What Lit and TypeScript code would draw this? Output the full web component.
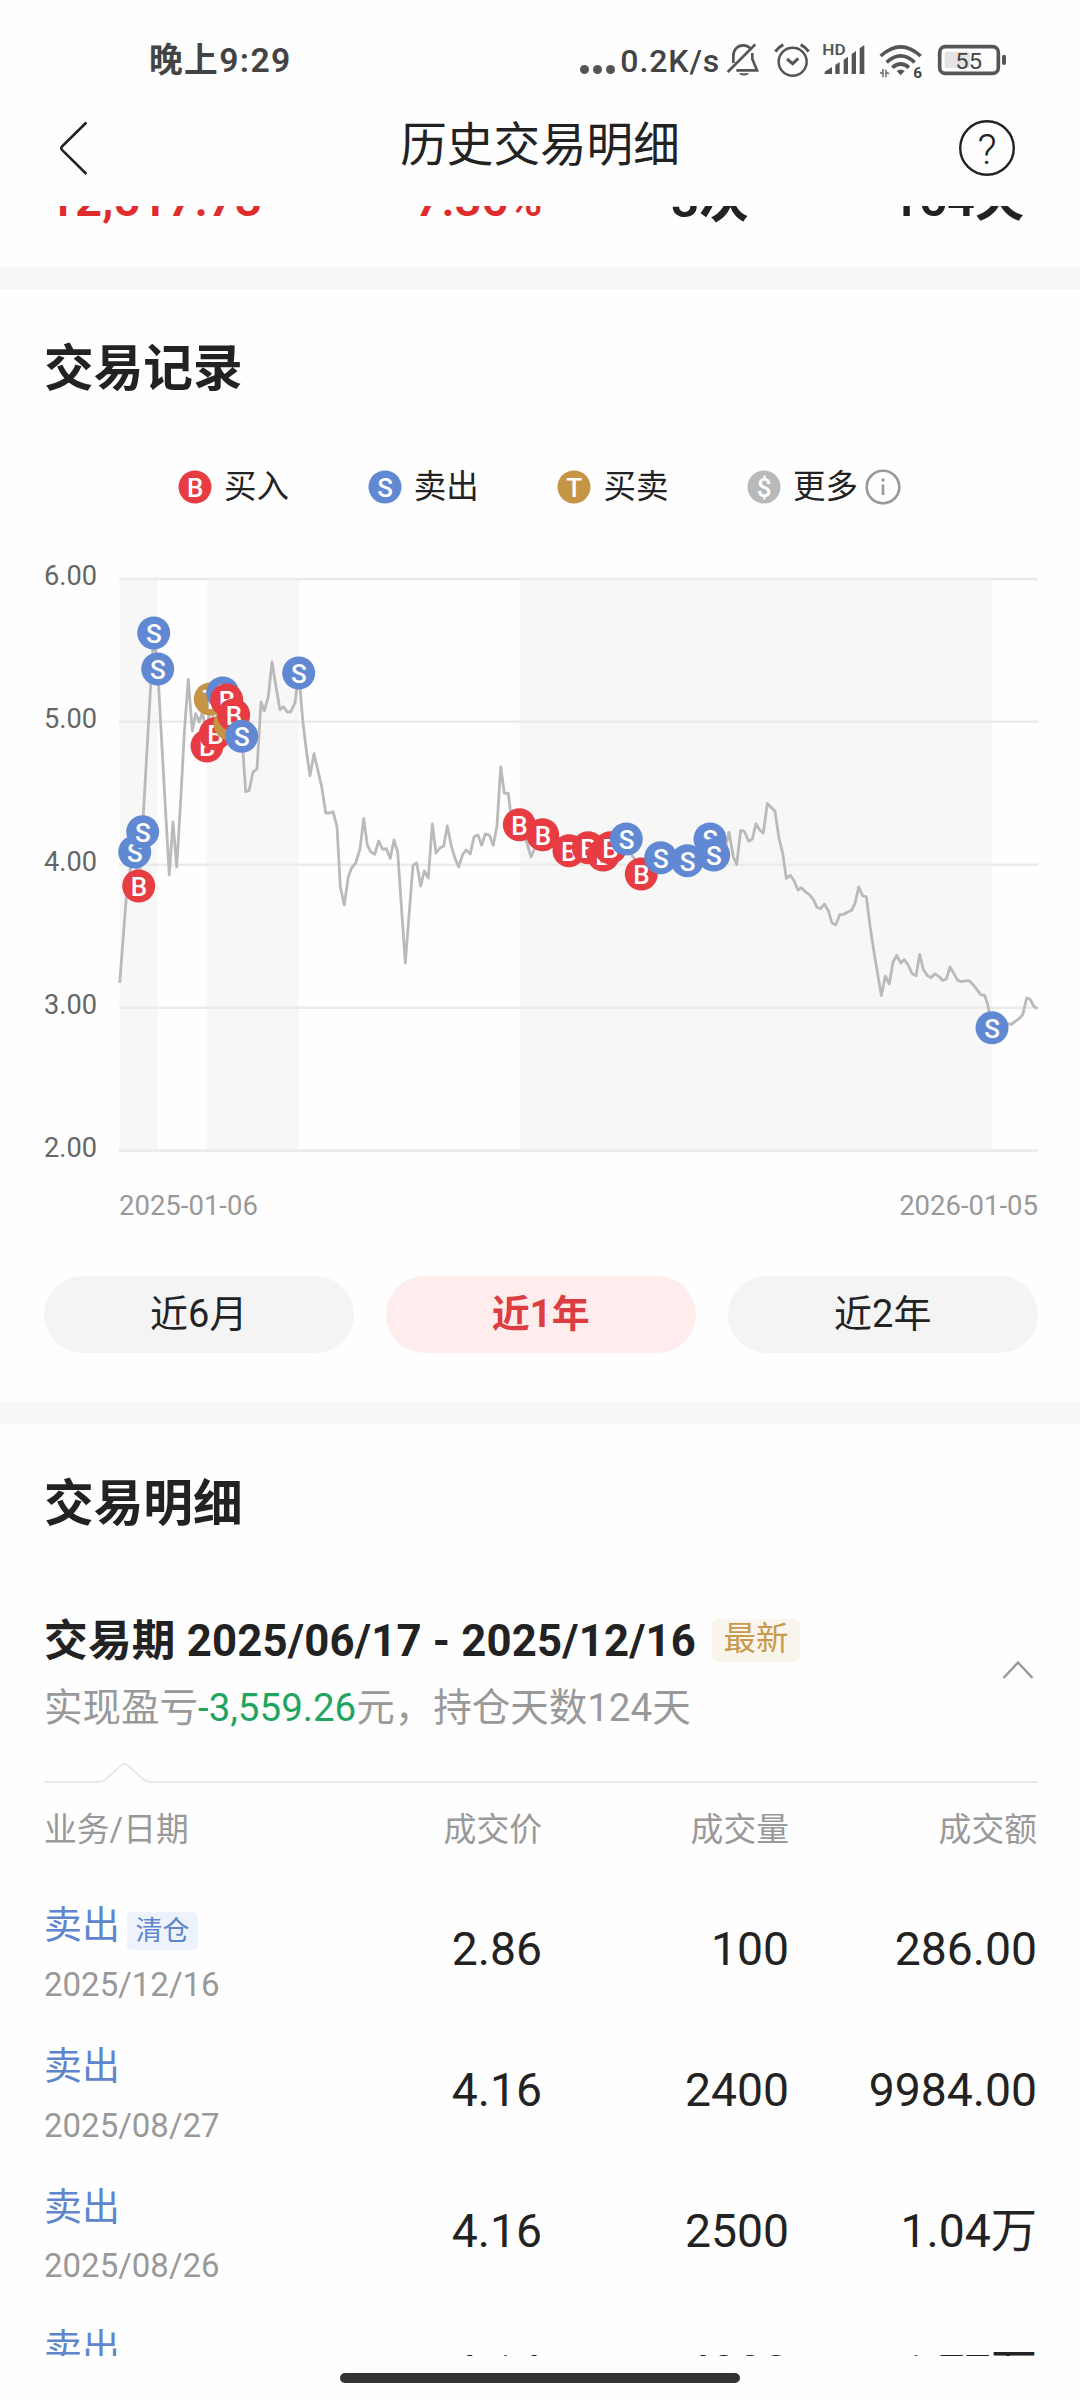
import { LitElement, html, css, svg } from "lit";
import { customElement, property } from "lit/decorators.js";
import { classMap } from "lit/directives/class-map.js";

type Kind = "B" | "S" | "T" | "$";

const COLORS: Record<Kind, string> = {
  B: "#e63c42",
  S: "#6088d3",
  T: "#c59545",
  $: "#b9b9b9",
};

const LINE: number[][] = [
  [119.7, 983], [123, 940], [126.5, 895], [131, 864], [134.7, 852], [138.7, 886], [142.7, 831.7], [143.5, 812],
  [147, 750], [150.7, 685], [153.7, 633], [157.7, 669], [161.5, 738], [165.5, 810], [169.3, 875], [173, 822],
  [176.7, 867], [180.7, 800], [184.5, 730], [188.3, 679.5], [192.3, 731], [195.7, 713.7], [199.3, 722],
  [202.3, 712], [207, 735], [210.5, 700], [215.3, 734], [222.7, 693], [226.7, 700], [230, 724], [233.7, 715],
  [241.7, 736], [243, 752], [245.7, 791.7], [249, 790.7], [253, 772], [257, 769], [261, 702], [264.3, 711],
  [268.3, 696.7], [272, 662], [276, 686.7], [280, 709.7], [283.3, 706.7], [287.3, 712], [290.7, 712],
  [295, 702.7], [298.7, 673], [303, 723], [306.7, 753], [310, 775.7], [314, 753.7], [321.7, 786.7],
  [325.7, 813], [329.3, 813], [333, 811.7], [337, 826.7], [340.3, 886.7], [344.3, 905], [348.3, 876.7],
  [351.7, 867.8], [355.7, 863], [360, 849], [363.7, 818.4], [367.3, 845], [370.7, 851.8], [374.7, 854.3],
  [378.7, 841], [382.7, 849.4], [386.3, 848.6], [390.3, 858.4], [394, 840], [397.7, 852], [401.7, 911],
  [405.3, 963], [409, 915.5], [413, 865.3], [416.7, 862.9], [420.7, 886], [424.3, 871], [428.3, 878],
  [432.3, 824], [436, 853], [440, 848], [443.7, 846], [447.3, 826], [451.3, 846], [455, 858.4], [458.7, 867],
  [462.7, 854.3], [466.3, 850], [470.3, 853.9], [474, 836.7], [478, 835], [481.7, 845.3], [485.3, 833.9],
  [489.3, 835], [493.3, 845.3], [497, 825.7], [500.7, 767], [504.3, 793], [508.3, 793.5], [511.5, 820],
  [519.3, 825], [527, 843], [531, 857], [535, 848], [542.7, 835], [569, 850], [588, 848], [603, 852],
  [610, 848], [626, 840], [631, 854], [636, 861], [641, 872], [660, 858], [687, 860], [710, 840],
  [714, 855], [725, 850], [729, 832.3], [733.3, 856.7], [736.7, 864.5], [740.7, 830.3], [744.3, 831.3],
  [748.7, 841.3], [752.3, 839], [756, 823.7], [759.7, 830], [763.3, 833], [767.3, 803.5], [775, 811.3],
  [779, 838.3], [782.7, 853.3], [786.3, 878.3], [790.3, 875.3], [794, 880.7], [798, 890], [801.3, 887.7],
  [805.7, 892], [809.3, 894.7], [813.3, 899.3], [817, 907.3], [820.7, 908.7], [824.3, 904], [828.3, 910.7],
  [832, 922.9], [835.7, 924.9], [839.7, 914.7], [843.7, 914.3], [847.3, 912.2], [851.7, 910.2],
  [855, 903.3], [858.7, 887], [862.7, 896], [866.3, 896.7], [870.3, 927.8], [874, 952.2], [881.3, 995.5],
  [885.3, 976], [889.3, 984], [893, 962], [896.7, 955.5], [900.7, 962.9], [904.3, 959.6], [908.3, 965.3],
  [912, 973.5], [916, 975.9], [919.7, 954.3], [923.3, 969.4], [927.3, 975.5], [931, 977.6], [935, 973.9],
  [938.7, 976.3], [942.7, 980.4], [946.3, 979.2], [950, 967], [954, 973.9], [957.7, 980.4], [961.7, 981.6],
  [965.3, 980.8], [969.3, 980.8], [973.3, 984.9], [980.7, 994.7], [984.7, 995.5], [987.7, 1004.5],
  [992, 1026], [1003, 1022], [1011, 1024.5], [1015, 1021.6], [1019, 1018.8], [1022.7, 1014.7],
  [1026.7, 998], [1030, 999.2], [1034, 1006.5], [1037.5, 1008.6],
];

const MARKS: [Kind, number, number][] = [
  ["S", 134.7, 852], ["B", 138.7, 886], ["S", 142.7, 831.7], ["S", 153.7, 633], ["S", 157.7, 669],
  ["B", 207, 746], ["T", 210.3, 699], ["B", 215.3, 733.7], ["S", 222.7, 693], ["B", 226.7, 700],
  ["T", 230, 724], ["B", 233.7, 715], ["S", 241.7, 736.3], ["S", 298.7, 673],
  ["B", 519.3, 824.7], ["B", 542.7, 834.7], ["B", 569, 850.7], ["B", 588.3, 847.7], ["B", 603.3, 855],
  ["B", 610.3, 847.7], ["S", 626.3, 839], ["B", 641.3, 874], ["S", 660.7, 857.7], ["S", 687.3, 860.7],
  ["S", 710, 839], ["S", 713.7, 855], ["S", 992, 1027.8],
];

const BANDS: [number, number][] = [[119.7, 157.7], [207, 298.7], [519.5, 992]];

const GRID: [string, number][] = [
  ["6.00", 579], ["5.00", 721.8], ["4.00", 864.8], ["3.00", 1007.8], ["2.00", 1150.6],
];

const mark = (kind: Kind, x: number, y: number) => svg`
  <circle cx=${x} cy=${y} r="16.5" fill=${COLORS[kind]}></circle>
  <text class="letter" x=${x + 0.2} y=${y + 9.9} text-anchor="middle">${kind}</text>`;

@customElement("trade-chart")
class TradeChart extends LitElement {
  static styles = css`
    :host { display: block; }
    svg { display: block; }
    text { font-family: Roboto, sans-serif; }
    .letter { font-size: 26px; font-weight: 500; fill: #fff; }
    .axis { font-size: 27.2px; fill: #666; }
  `;
  render() {
    return html`<svg width="1080" height="620" viewBox="0 540 1080 620">
      ${BANDS.map(([a, b]) => svg`<rect x=${a} y="580" width=${b - a} height="570" fill="#f7f7f7"></rect>`)}
      ${GRID.map(([label, y]) => svg`
        <line x1="119" x2="1038" y1=${y} y2=${y} stroke="#ebebeb" stroke-width="2.6"></line>
        <text class="axis" x="44" y=${y + 6.4}>${label}</text>`)}
      <polyline points=${LINE.map((p) => p.join(",")).join(" ")} fill="none" stroke="#bababa"
        stroke-width="2.8" stroke-linejoin="round"></polyline>
      ${MARKS.map(([k, x, y]) => mark(k, x, y))}
    </svg>`;
  }
}

@customElement("trade-dot")
class TradeDot extends LitElement {
  @property() kind: Kind = "B";
  static styles = css`
    :host { display: block; width: 34px; height: 34px; }
    svg { display: block; }
    .letter { font-family: Roboto, sans-serif; font-size: 26px; font-weight: 500; fill: #fff; }
  `;
  render() {
    return html`<svg width="34" height="34" viewBox="0 0 34 34">${mark(this.kind, 17, 17)}</svg>`;
  }
}

@customElement("status-bar")
class StatusBar extends LitElement {
  static styles = css`
    :host {
      display: flex; align-items: center; box-sizing: border-box; height: 95px; padding: 35px 70px 0 149px;
      font-family: Roboto, "Noto Sans CJK SC", sans-serif; color: #434343; font-weight: 500;
    }
    svg { display: block; }
    .time { font-size: 33.7px; line-height: 52px; letter-spacing: 1.4px; font-weight: 600; flex: 1; align-self: flex-start; }
    .dots { display: flex; gap: 4px; padding: 9px 5px 0 0; }
    .dot { width: 9px; height: 9px; border-radius: 50%; background: #555; }
    .rate { font-size: 32px; line-height: 52px; letter-spacing: 0.9px; width: 103px; white-space: nowrap; align-self: flex-start; }
    .icon-text { font-family: Roboto, sans-serif; }
  `;
  render() {
    return html`
      <span class="time">晚上9:29</span>
      <span class="dots"><i class="dot"></i><i class="dot"></i><i class="dot"></i></span>
      <span class="rate">0.2K/s</span>
      <svg width="44" height="60" viewBox="460 0 132 180" fill="none" stroke="#555" stroke-width="8">
        <path d="M491 84V63C491 44 503 31 521 31C531 31 538 35 543 41M548 54V72L562 106H500" />
        <path d="M474 111L557 28" />
        <path d="M508 115H538C534 124 512 124 508 115Z" fill="#555" stroke="none" />
      </svg>
      <svg width="49.33" height="60" viewBox="592 0 148 180" fill="none" stroke="#555" stroke-width="7.5">
        <circle cx="669" cy="80" r="42" />
        <path d="M617 50Q627 36 641 29M717 50Q707 36 693 29" stroke-width="9" />
        <path d="M652 72L669 86L686 70" stroke-width="9" />
      </svg>
      <svg width="56.67" height="60" viewBox="740 0 170 180" fill="#555">
        <text class="icon-text" x="756" y="59" font-size="45" font-weight="600" textLength="70" lengthAdjust="spacingAndGlyphs">HD</text>
        <path d="M763 117V110L785 96V117ZM795 117V90L808 81V117ZM820 117V74L833 65V117ZM844 117V57L857 48V117ZM868 117V40L882 30V117Z" />
      </svg>
      <svg width="56.67" height="60" viewBox="910 0 170 180" fill="none" stroke="#555" stroke-width="11">
        <path d="M933 63Q993 8 1053 63M951 82Q993 43 1035 82M968 98Q993 76 1018 98" />
        <path d="M981 108Q993 99 1005 108L993 121Z" fill="#555" stroke="none" />
        <path d="M940 102V127M940 116L931 113M949 127V104M949 112L958 116" stroke="#777" stroke-width="5" />
        <text class="icon-text" x="1031" y="128" font-size="46" font-weight="700" fill="#444" stroke="none">6</text>
      </svg>
      <svg width="80" height="60" viewBox="1080 0 240 180">
        <rect x="1109" y="35" width="176" height="80" rx="17" fill="none" stroke="#555" stroke-width="11" />
        <rect x="1124" y="50" width="76" height="49" rx="7" fill="#e3e3e3" />
        <text class="icon-text" x="1156" y="101" font-size="68" font-weight="400" fill="#444" textLength="80" lengthAdjust="spacingAndGlyphs">55</text>
        <rect x="1296" y="59" width="12" height="31" rx="6" fill="#555" />
      </svg>`;
  }
}

interface Row {
  date: string;
  price: string;
  volume: string;
  amount: string;
  tag?: string;
}

const ROWS: Row[] = [
  { date: "2025/12/16", price: "2.86", volume: "100", amount: "286.00", tag: "清仓" },
  { date: "2025/08/27", price: "4.16", volume: "2400", amount: "9984.00" },
  { date: "2025/08/26", price: "4.16", volume: "2500", amount: "1.04万" },
  { date: "2025/08/25", price: "4.14", volume: "4300", amount: "1.77万" },
];

const LEGEND: [Kind, string][] = [["B", "买入"], ["S", "卖出"], ["T", "买卖"], ["$", "更多"]];
const RANGES = ["近6月", "近1年", "近2年"];

@customElement("app-root")
class AppRoot extends LitElement {
  static styles = css`
    :host {
      display: flex; flex-direction: column; width: 1080px; height: 2400px; overflow: hidden;
      background: #fefefe; color: #222; font-family: Roboto, "Noto Sans CJK SC", sans-serif;
    }
    svg { display: block; }
    .nav { display: flex; align-items: center; justify-content: space-between; height: 105px; padding: 0 64px 6px 58px; flex: none; }
    .nav-title { font-size: 46.6px; line-height: 60px; padding: 0 0 5px 32px; }
    .help { font-size: 42px; font-weight: 300; fill: #222; }
    .page { height: 2149.5px; flex: none; overflow: hidden; }
    .stats { display: flex; margin-top: -31px; padding: 0 0 42px 48px; font-size: 47.4px; line-height: 50px; font-weight: 600; white-space: nowrap; }
    .stat { flex: none; }
    .up { color: #e02c2c; width: 367px; }
    .rate { width: 256px; font-size: 46.6px; }
    .count { width: 220px; font-size: 49.5px; }
    .days { font-size: 49px; }
    .divider { height: 22px; background: #f7f7f7; }
    .title { margin: 0; padding: 49.5px 44px 0; font-size: 49.7px; line-height: 60px; font-weight: 700; }
    .legend { display: flex; margin-top: 70px; padding-left: 178px; height: 36px; align-items: center; }
    .legend-item { display: flex; align-items: center; gap: 12px; width: 189.7px; font-size: 32.5px; line-height: 36px; white-space: nowrap; }
    .info { margin-left: -5px; }
    .chart { display: block; margin-top: 35px; }
    .dates { display: flex; justify-content: space-between; margin: 30px 42px 0 119px; font-size: 27.5px; line-height: 32px; color: #999; }
    .ranges { display: flex; gap: 32.5px; margin: 54px 42.5px 49.5px 44px; }
    .range { flex: 1; border-radius: 39px; background: #f4f4f4; text-align: center; font-size: 38px; line-height: 76.5px; height: 77px; }
    .range.active { background: #ffeded; color: #dd3c40; font-weight: 700; }
    .period { display: flex; align-items: center; margin-top: 82px; padding: 0 44px; height: 50px; font-size: 43.7px; line-height: 52px; font-weight: 700; letter-spacing: 0.2px; white-space: nowrap; }
    .period-text { width: 668px; }
    .badge { font-size: 32.5px; font-weight: 400; letter-spacing: 0; line-height: 41px; height: 43px; width: 88px; text-align: center; background: #f9f4ec; color: #c89a4b; border-radius: 6px; }
    .summary { display: flex; justify-content: space-between; align-items: flex-start; margin-top: 19.5px; padding: 0 46px 0 44px; height: 45px; line-height: 46px; font-size: 38.5px; color: #999; }
    .down { color: #1fa55f; }
    .fold { margin-top: -25px; }
    .tip { margin: 31.5px 0 0 44px; }
    .grid { display: grid; grid-template-columns: 250px 248px 247px 248px; padding-left: 44px; text-align: right; }
    .head { margin-top: 26.5px; font-size: 32.8px; line-height: 40px; color: #999; }
    .rows { margin-top: 29.3px; }
    .row { height: 140.8px; font-size: 46.3px; line-height: 140.8px; }
    .left { text-align: left; }
    .deal { display: flex; flex-direction: column; padding-top: 21px; text-align: left; }
    .kind { display: flex; gap: 7px; font-size: 38px; line-height: 50px; height: 50px; color: #5f86cc; }
    .tag { margin-top: 11.5px; width: 71px; height: 38px; border-radius: 5px; background: #edf2fb; font-size: 27px; line-height: 39px; text-align: center; }
    .date { margin-top: 14.5px; font-size: 33px; line-height: 40px; color: #999; }
    .foot { display: flex; justify-content: center; padding-top: 17.5px; }
    .home { width: 400px; height: 10px; border-radius: 5px; background: #333; }
  `;
  render() {
    return html`
      <status-bar></status-bar>
      <div class="nav">
        <svg width="32" height="60" viewBox="58 117.5 32 60" fill="none" stroke="#222" stroke-width="2.5" stroke-linejoin="round">
          <path d="M86.4 122L62 146Q60.5 147.7 62 149.4L86.4 173.5" />
        </svg>
        <span class="nav-title">历史交易明细</span>
        <svg width="58" height="60" viewBox="958 117.5 58 60">
          <circle cx="987" cy="147.5" r="26.8" fill="none" stroke="#222" stroke-width="2.4" />
          <text class="help" x="987" y="163" text-anchor="middle">?</text>
        </svg>
      </div>
      <div class="page">
        <div class="stats">
          <span class="stat up">12,517.73</span>
          <span class="stat up rate">7.36%</span>
          <span class="stat count">3次</span>
          <span class="stat days">164天</span>
        </div>
        <div class="divider"></div>
        <h2 class="title">交易记录</h2>
        <div class="legend">
          ${LEGEND.map(([k, label]) => html`<span class="legend-item">
            <trade-dot .kind=${k}></trade-dot>${label}
            ${k === "$" ? html`<svg class="info" width="36" height="36" viewBox="0 0 36 36" fill="none" stroke="#999" stroke-width="2.6">
              <circle cx="18" cy="18" r="16.3" /><path d="M18 15.5V26" /><circle cx="18" cy="11" r="1.7" fill="#999" stroke="none" />
            </svg>` : null}
          </span>`)}
        </div>
        <trade-chart class="chart"></trade-chart>
        <div class="dates"><span>2025-01-06</span><span>2026-01-05</span></div>
        <div class="ranges">
          ${RANGES.map((r, i) => html`<div class=${classMap({ range: true, active: i === 1 })}>${r}</div>`)}
        </div>
        <div class="divider"></div>
        <h2 class="title">交易明细</h2>
        <div class="period">
          <span class="period-text">交易期 2025/06/17 - 2025/12/16</span>
          <span class="badge">最新</span>
        </div>
        <div class="summary">
          <span>实现盈亏<span class="down">-3,559.26</span>元，持仓天数124天</span>
          <svg class="fold" width="32" height="20" viewBox="0 0 32 20" fill="none" stroke="#999" stroke-width="2.5">
            <path d="M1.5 18L16 2.5L30.5 18" />
          </svg>
        </div>
        <svg class="tip" width="994" height="22" viewBox="44 1762 994 22" fill="none" stroke="#e9e9e9" stroke-width="2">
          <path d="M44 1782H98Q103 1782 106 1779L121 1765.5Q124.6 1762.5 128 1765.5L143 1779Q146 1782 151 1782H1038" />
        </svg>
        <div class="grid head">
          <span class="left">业务/日期</span><span>成交价</span><span>成交量</span><span>成交额</span>
        </div>
        <div class="rows">
          ${ROWS.map((r) => html`<div class="grid row">
            <div class="deal">
              <div class="kind">卖出${r.tag ? html`<span class="tag">${r.tag}</span>` : null}</div>
              <div class="date">${r.date}</div>
            </div>
            <span>${r.price}</span><span>${r.volume}</span><span>${r.amount}</span>
          </div>`)}
        </div>
      </div>
      <div class="foot"><div class="home"></div></div>
    `;
  }
}
